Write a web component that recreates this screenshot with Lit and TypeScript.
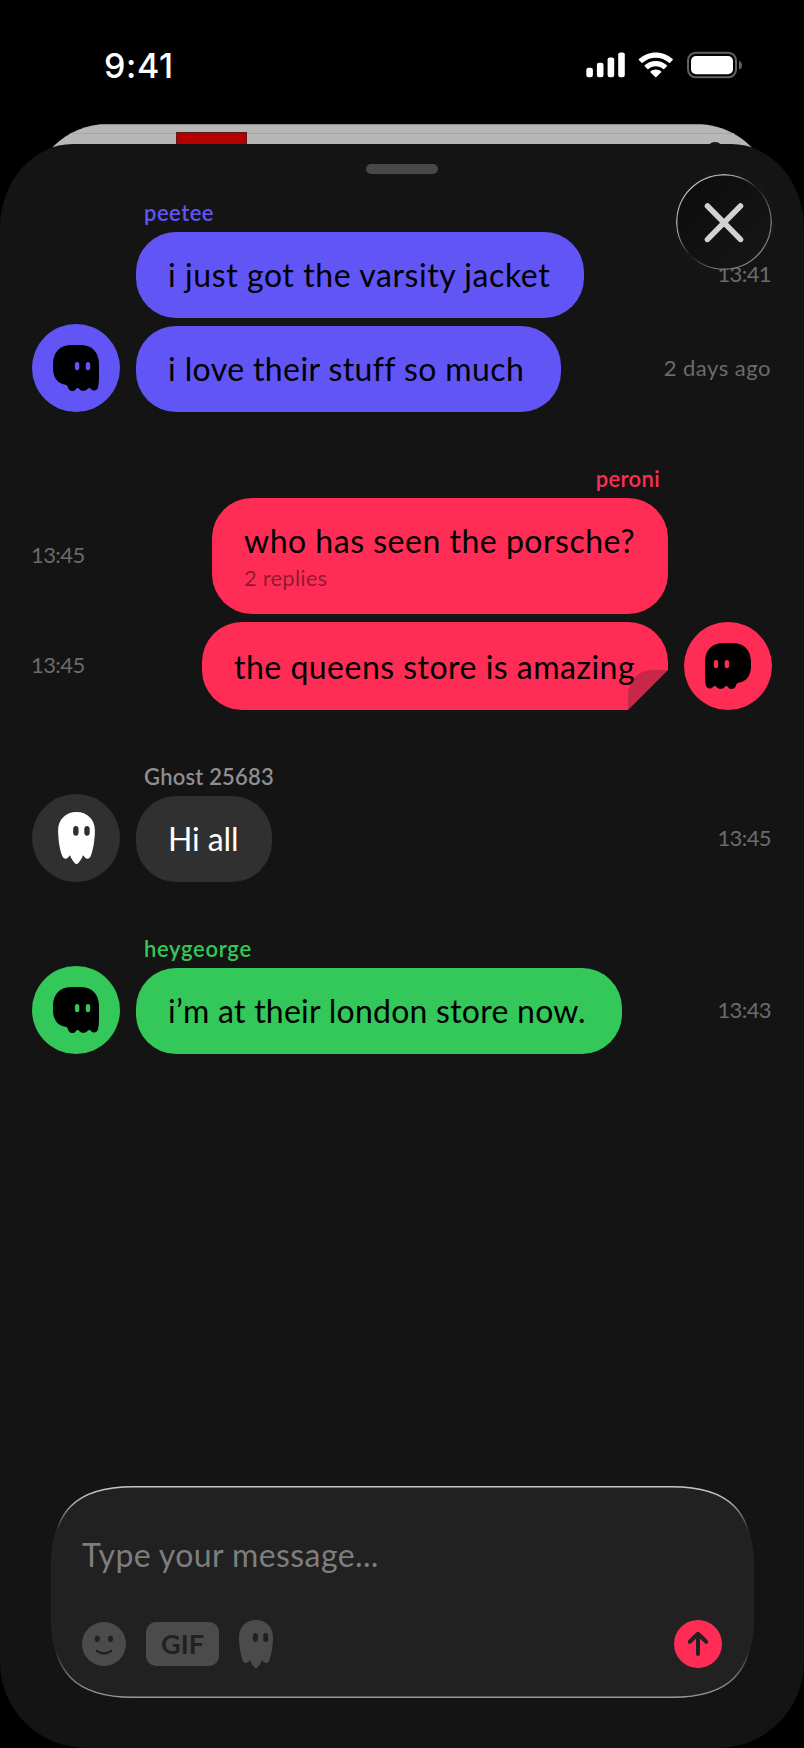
import { LitElement, html, css, nothing } from "lit";
import { customElement, property } from "lit/decorators.js";
import { classMap } from "lit/directives/class-map.js";
import { styleMap } from "lit/directives/style-map.js";

type GhostKind = "round" | "tall";

interface Message {
  text: string;
  time: string;
  width: number;
  tracking: number;
  replies?: string;
  folded?: boolean;
}

interface Group {
  author: string;
  tone: "violet" | "rose" | "gray" | "green";
  ghost: GhostKind;
  own?: boolean;
  labelTracking: number;
  messages: Message[];
}

const GROUPS: Group[] = [
  {
    author: "peetee",
    tone: "violet",
    ghost: "round",
    labelTracking: 0.5,
    messages: [
      { text: "i just got the varsity jacket", time: "13:41", width: 448, tracking: 0.58 },
      { text: "i love their stuff so much", time: "2 days ago", width: 424.5, tracking: 0.39 },
    ],
  },
  {
    author: "peroni",
    tone: "rose",
    ghost: "round",
    own: true,
    labelTracking: 0.35,
    messages: [
      { text: "who has seen the porsche?", time: "13:45", width: 456, tracking: 0.51, replies: "2 replies" },
      { text: "the queens store is amazing", time: "13:45", width: 466, tracking: 0.49, folded: true },
    ],
  },
  {
    author: "Ghost 25683",
    tone: "gray",
    ghost: "tall",
    labelTracking: 0.2,
    messages: [{ text: "Hi all", time: "13:45", width: 136, tracking: -0.1 }],
  },
  {
    author: "heygeorge",
    tone: "green",
    ghost: "round",
    labelTracking: 0.7,
    messages: [{ text: "i’m at their london store now.", time: "13:43", width: 486, tracking: 0.25 }],
  },
];

@customElement("ghost-icon")
class GhostIcon extends LitElement {
  @property() kind: GhostKind = "round";

  static styles = css`
    :host { display: block; }
    svg { display: block; width: 100%; height: 100%; fill: currentColor; }
  `;

  render() {
    return this.kind === "round"
      ? html`<svg viewBox="0 0 46 46">
          <path fill-rule="evenodd" d="M19 0H27C39 0 46 7 46 19V30C46 37 45.6 41 44.6 43.6C43.4 46 40 46 38.4 44.4C37 42.6 35.6 42.6 34.2 44.2C32 46.4 28.6 46.4 26.6 44.2C25.2 42.6 24 42.6 22.6 44.4C20.4 47 16.6 46.4 15.2 43C14.6 41 14.2 40 12.4 39.8C4 38.4 0 32 0 23V19C0 7 7 0 19 0Z
            M24.1 17C22.6 17 21.9 18 21.9 19.4V22.8C21.9 24.2 22.6 25.2 24.1 25.2C25.6 25.2 26.3 24.2 26.3 22.8V19.4C26.3 18 25.6 17 24.1 17Z
            M35 17C33.5 17 32.8 18 32.8 19.4V22.8C32.8 24.2 33.5 25.2 35 25.2C36.5 25.2 37.2 24.2 37.2 22.8V19.4C37.2 18 36.5 17 35 17Z"/>
        </svg>`
      : html`<svg viewBox="0 0 34 48">
          <path fill-rule="evenodd" d="M17 0C27 0 34 7 34 17C33.9 26 32.4 35 30.2 40.4C29.2 43.2 26.6 44 24.8 42L23 40C21.8 43.4 19.6 46.4 18 47.7Q17 48.3 16 47.7C14.4 46.4 12.2 43.4 11 40L9.2 42C7.4 44 4.8 43.2 3.8 40.4C1.6 35 0.1 26 0 17C0 7 7 0 17 0Z
            M16.4 13C14.6 13 13.9 14.4 13.9 16V19C13.9 20.6 14.6 22 16.4 22C18.2 22 18.9 20.6 18.9 19V16C18.9 14.4 18.2 13 16.4 13Z
            M26.7 13C24.9 13 24.2 14.4 24.2 16V19C24.2 20.6 24.9 22 26.7 22C28.5 22 29.2 20.6 29.2 19V16C29.2 14.4 28.5 13 26.7 13Z"/>
        </svg>`;
  }
}

@customElement("status-bar")
class StatusBar extends LitElement {
  static styles = css`
    :host {
      display: flex;
      justify-content: space-between;
      align-items: center;
      height: 40px;
      padding: 45px 62px 0 104px;
      color: #fff;
    }
    .clock { padding-top: 2px; font: 550 34px/40px Inter, sans-serif; letter-spacing: 0.6px; }
    svg { display: block; }
  `;

  render() {
    return html`
      <span class="clock">9:41</span>
      <svg width="158" height="28" viewBox="0 0 158 28" fill="#fff">
        <rect x="2.3" y="16.8" width="6.6" height="9.4" rx="2.2" />
        <rect x="12.9" y="11.8" width="6.6" height="14.4" rx="2.2" />
        <rect x="23.6" y="6.4" width="6.6" height="19.8" rx="2.2" />
        <rect x="34.2" y="1.4" width="6.6" height="24.8" rx="2.2" />
        <g transform="translate(71.8 26.2)">
          <path d="M0 -24.8C6.3 -24.8 12.3 -22.4 16.9 -18.1Q17.4 -17.6 16.9 -17.1L14.3 -14.4Q13.8 -13.9 13.2 -14.4C9.6 -17.7 4.9 -19.5 0 -19.5C-4.9 -19.5 -9.6 -17.7 -13.2 -14.4Q-13.8 -13.9 -14.3 -14.4L-16.9 -17.1Q-17.4 -17.6 -16.9 -18.1C-12.3 -22.4 -6.3 -24.8 0 -24.8Z" />
          <path d="M0 -16.2C4.1 -16.2 8 -14.7 11.1 -11.9Q11.6 -11.4 11.1 -10.9L8.4 -8.2Q7.9 -7.7 7.3 -8.2C5.3 -10 2.7 -11 0 -11C-2.7 -11 -5.3 -10 -7.3 -8.2Q-7.9 -7.7 -8.4 -8.2L-11.1 -10.9Q-11.6 -11.4 -11.1 -11.9C-8 -14.7 -4.1 -16.2 0 -16.2Z" />
          <path d="M0 -7.8C2 -7.8 3.8 -7.1 5.2 -5.9Q5.8 -5.4 5.2 -4.8L0.6 -0.2Q0 0.3 -0.6 -0.2L-5.2 -4.8Q-5.8 -5.4 -5.2 -5.9C-3.8 -7.1 -2 -7.8 0 -7.8Z" />
        </g>
        <rect x="104" y="1.8" width="48" height="24.4" rx="7.6" fill="none" stroke="#616161" stroke-width="2" />
        <rect x="107" y="5" width="42" height="18.2" rx="5" />
        <path d="M155 9.8C156.8 10.5 158 12.2 158 14.2C158 16.2 156.8 17.9 155 18.6Z" fill="#616161" />
      </svg>
    `;
  }
}

@customElement("chat-group")
class ChatGroup extends LitElement {
  @property({ attribute: false }) group!: Group;

  static styles = css`
    :host { display: block; }
    .author { padding: 2px 112px 0; margin-bottom: -2px; font-size: 22px; line-height: 26px; font-weight: 600; }
    .row { display: flex; align-items: flex-end; gap: 16px; }
    .own .row { flex-direction: row-reverse; }
    .own .author { text-align: right; }
    .wrap { display: flex; flex-direction: column; gap: 8px; }
    .slot { width: 88px; flex: none; }
    .avatar {
      display: flex;
      align-items: center;
      justify-content: center;
      height: 88px;
      margin-top: -2px;
      border-radius: 50%;
      color: #000;
    }
    .own .avatar { margin-top: 0; }
    .own ghost-icon { transform: scaleX(-1); }
    .round { width: 46px; height: 46px; }
    .tall { width: 37px; height: 52px; }
    .bubble {
      position: relative;
      box-sizing: border-box;
      padding: 24px 0 24px 32px;
      border-radius: 40px;
      color: #000;
      font-size: 32px;
      line-height: 38px;
      white-space: nowrap;
    }
    .bubble.folded {
      padding: 26px 0 24px 32px;
      border-bottom-right-radius: 0;
      clip-path: polygon(0 0, 100% 0, 100% calc(100% - 40px), calc(100% - 40px) 100%, 0 100%);
    }
    .fold {
      position: absolute;
      right: 0;
      bottom: 0;
      width: 40px;
      height: 40px;
      border-top-left-radius: 24px;
      background: rgba(36, 24, 36, 0.25);
    }
    .body { display: block; }
    .replies {
      display: block;
      padding: 5px 0 0;
      margin-bottom: -1px;
      font-size: 22px;
      line-height: 26px;
      letter-spacing: 0.2px;
      color: rgba(0, 0, 0, 0.45);
    }
    .time {
      align-self: center;
      margin: -2px 1px 0 auto;
      font-size: 22px;
      line-height: 26px;
      letter-spacing: -0.6px;
      color: #6b6b6d;
      white-space: nowrap;
    }
    .time.words { letter-spacing: 0.5px; }
    .own .time { margin: -2px auto 0 -1px; }
    .violet .bubble, .violet .avatar { background: #6155f5; }
    .violet .author { color: #6155f5; }
    .rose .bubble, .rose .avatar { background: #ff2d55; }
    .rose .author { color: #ff2d55; }
    .green .bubble, .green .avatar { background: #34c759; }
    .green .author { color: #34c759; }
    .gray .bubble, .gray .avatar { background: #303030; color: #fff; }
    .gray .author { color: #8e8e93; }
  `;

  private row(m: Message, last: boolean) {
    const g = this.group;
    return html`
      <div class="row">
        <div class="slot">
          ${last
            ? html`<div class="avatar"><ghost-icon class=${g.ghost} .kind=${g.ghost}></ghost-icon></div>`
            : nothing}
        </div>
        <div class=${classMap({ bubble: true, folded: !!m.folded })} style=${styleMap({ width: `${m.width}px` })}>
          <span class="body" style=${styleMap({ letterSpacing: `${m.tracking}px` })}>${m.text}</span>
          ${m.replies ? html`<span class="replies">${m.replies}</span>` : nothing}
          ${m.folded ? html`<span class="fold"></span>` : nothing}
        </div>
        <span class=${classMap({ time: true, words: m.time.includes(" ") })}>${m.time}</span>
      </div>
    `;
  }

  render() {
    const g = this.group;
    return html`
      <div class=${classMap({ wrap: true, own: !!g.own, [g.tone]: true })}>
        <div class="author" style=${styleMap({ letterSpacing: `${g.labelTracking}px` })}>${g.author}</div>
        ${g.messages.map((m, i) => this.row(m, i === g.messages.length - 1))}
      </div>
    `;
  }
}

const COMPOSER_OUTLINE =
  "M82 0.7H621C678 0.7 702.3 25 702.3 82V130C702.3 187 678 211.3 621 211.3H82C25 211.3 0.7 187 0.7 130V82C0.7 25 25 0.7 82 0.7Z";

@customElement("message-composer")
class MessageComposer extends LitElement {
  static styles = css`
    :host {
      position: relative;
      display: flex;
      flex-direction: column;
      justify-content: space-between;
      box-sizing: border-box;
      height: 212px;
      padding: 50px 31.5px 30px;
    }
    .panel { position: absolute; inset: 0; width: 100%; height: 100%; }
    .placeholder {
      position: relative;
      font-size: 32px;
      line-height: 38px;
      letter-spacing: 0.4px;
      color: #7e7e7e;
    }
    .tools { position: relative; display: flex; align-items: center; height: 48px; color: #4b4b4b; }
    .tools svg { display: block; }
    .gif {
      width: 73px;
      height: 44px;
      margin: 0 20px;
      border-radius: 10px;
      background: #4b4b4b;
      color: #212121;
      font-weight: 700;
      font-size: 27px;
      line-height: 44px;
      text-align: center;
    }
    ghost-icon { width: 34px; height: 48px; }
    .send { margin-left: auto; }
  `;

  render() {
    return html`
      <svg class="panel" viewBox="0 0 703 212">
        <defs>
          <linearGradient id="edge" x1="0" y1="0" x2="0" y2="212" gradientUnits="userSpaceOnUse">
            <stop offset="0" stop-color="#c8c8c8" />
            <stop offset="0.09" stop-color="#aaaaaa" />
            <stop offset="0.21" stop-color="#242424" />
            <stop offset="0.78" stop-color="#242424" />
            <stop offset="0.9" stop-color="#7c7c7c" />
            <stop offset="1" stop-color="#9a9a9a" />
          </linearGradient>
        </defs>
        <path d=${COMPOSER_OUTLINE} fill="#212121" stroke="url(#edge)" stroke-width="1.4" />
      </svg>
      <div class="placeholder">Type your message...</div>
      <div class="tools">
        <svg width="44" height="44" viewBox="0 0 44 44">
          <circle cx="22" cy="22" r="22" fill="#4b4b4b" />
          <ellipse cx="15.3" cy="16.8" rx="2.6" ry="3.1" fill="#212121" />
          <ellipse cx="28.5" cy="16.8" rx="2.6" ry="3.1" fill="#212121" />
          <path d="M15 29Q22 34 29 29" fill="none" stroke="#212121" stroke-width="2.6" stroke-linecap="round" />
        </svg>
        <div class="gif">GIF</div>
        <ghost-icon .kind=${"tall"}></ghost-icon>
        <svg class="send" width="48" height="48" viewBox="0 0 48 48">
          <circle cx="24" cy="24" r="24" fill="#ff2d55" />
          <path d="M24 34V14M15.8 21.8L24 13.8L32.2 21.8" fill="none" stroke="#212121" stroke-width="4" stroke-linecap="round" stroke-linejoin="round" />
        </svg>
      </div>
    `;
  }
}

@customElement("app-root")
class AppRoot extends LitElement {
  static styles = css`
    :host {
      display: flex;
      flex-direction: column;
      width: 804px;
      height: 1748px;
      overflow: hidden;
      background: #000;
      font-family: Lato, "Open Sans", sans-serif;
    }
    .behind { display: block; flex: none; margin: 39px 32px 0; width: 740px; height: 90px; }
    .sheet {
      position: relative;
      display: flex;
      flex-direction: column;
      flex: 1;
      box-sizing: border-box;
      margin-top: -70px;
      padding: 20px 0 50px;
      border-radius: 73px 73px 86px 86px / 84px 84px 86px 86px;
      background: #141414;
    }
    .handle { align-self: center; width: 72px; height: 10px; border-radius: 5px; background: #484848; }
    .groups { display: flex; flex-direction: column; gap: 52px; padding: 24px 32px 0; }
    .close {
      position: absolute;
      top: 30px;
      right: 32px;
      display: block;
      border-radius: 50%;
      box-shadow: 0 0 60px rgba(255, 255, 255, 0.025);
    }
    message-composer { margin: auto 50.5px 0; }
  `;

  render() {
    return html`
      <status-bar></status-bar>
      <svg class="behind" viewBox="0 0 740 90">
        <path d="M0 90V76C0 32 34 0 76 0H664C706 0 740 32 740 76V90Z" fill="#b7b7b7" />
        <path d="M70 0.6H670" stroke="#8e8e8e" stroke-width="1" />
        <path d="M38 9.5H702" stroke="#a6a6a6" stroke-width="1" />
        <rect x="144.5" y="8.5" width="70" height="30" fill="#b30000" stroke="#5c1a1a" />
        <circle cx="683" cy="26" r="8" fill="#151515" />
      </svg>
      <main class="sheet">
        <div class="handle"></div>
        <div class="groups">${GROUPS.map((g) => html`<chat-group .group=${g}></chat-group>`)}</div>
        <svg class="close" width="96" height="96" viewBox="0 0 96 96">
          <defs>
            <linearGradient id="rim" x1="14" y1="14" x2="82" y2="82" gradientUnits="userSpaceOnUse">
              <stop offset="0" stop-color="#bcbcbc" />
              <stop offset="0.25" stop-color="#9a9a9a" />
              <stop offset="0.5" stop-color="#191919" />
              <stop offset="0.75" stop-color="#6e6e6e" />
              <stop offset="1" stop-color="#848484" />
            </linearGradient>
            <linearGradient id="glass" x1="14" y1="14" x2="82" y2="82" gradientUnits="userSpaceOnUse">
              <stop offset="0" stop-color="#0d0d0d" />
              <stop offset="1" stop-color="#151515" />
            </linearGradient>
          </defs>
          <circle cx="48" cy="48" r="47.3" fill="url(#glass)" stroke="url(#rim)" stroke-width="1.4" />
          <path d="M31.5 32L64.5 65.4M64.5 32L31.5 65.4" stroke="#d2d2d2" stroke-width="5.6" stroke-linecap="round" />
        </svg>
        <message-composer></message-composer>
      </main>
    `;
  }
}
